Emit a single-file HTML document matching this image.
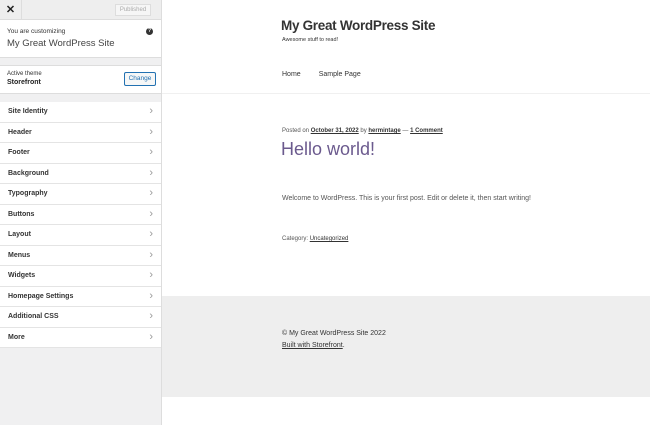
<!DOCTYPE html>
<html><head><style>
*{margin:0;padding:0;box-sizing:border-box}
body{width:650px;height:425px;overflow:hidden;font-family:"Liberation Sans",sans-serif;background:#fff;position:relative}
#sb{position:absolute;left:0;top:0;width:162px;height:425px;background:#f0f0f1;border-right:1px solid #ddd}
.top{height:20px;background:#eee;border-bottom:1px solid #ddd;position:relative}
.x{position:absolute;left:0;top:0;width:22px;height:20px;border-right:1px solid #ddd;font-size:11px;font-weight:bold;text-align:center;line-height:20px;color:#222}
.pub{position:absolute;right:10px;top:4px;width:36px;height:12px;border:1px solid #ddd;background:#f6f6f6;color:#aaa;font-size:6px;text-align:center;line-height:11px}
.cust{background:#fff;height:38px;border-bottom:1px solid #ddd;position:relative;padding:8px 7px}
.cust .s{font-size:6.5px;color:#333}
.cust .t{font-size:9.5px;color:#444;margin-top:3px}
.q{position:absolute;right:8px;top:8px;width:7px;height:7px;border-radius:50%;background:#333;color:#fff;font-size:5px;text-align:center;line-height:7px;font-weight:bold}
.th{background:#fff;margin-top:7px;height:29px;border-top:1px solid #ddd;border-bottom:1px solid #ddd;position:relative;padding:5px 7px}
.th .a{font-size:6px;color:#333}.th .b{font-size:7px;font-weight:bold;color:#222;margin-top:2px}
.ch{position:absolute;right:5px;top:6px;width:32px;height:14px;border:1px solid #2271b1;background:#f6f7f7;color:#2271b1;font-size:6.5px;text-align:center;line-height:12px;border-radius:2px}
.list{margin-top:8px}
.it{height:20.5px;background:#fff;border-bottom:1px solid #e4e4e4;font-size:7px;font-weight:bold;color:#333;padding-left:8px;line-height:20px;position:relative}
.it:after{content:"›";position:absolute;right:8px;top:0;font-size:11px;font-weight:normal;color:#999;line-height:19px}
#main{position:absolute;left:162px;top:0;width:488px;height:425px}
.h1{position:absolute;left:119px;top:18px;font-size:13.5px;font-weight:bold;color:#333;letter-spacing:-0.3px}
.tag{position:absolute;left:120px;top:37px;font-size:5.5px;color:#333}
.nav{position:absolute;left:120px;top:71px;font-size:7px;color:#333}
.nav span{margin-right:18px}
.hr{position:absolute;left:0;top:93px;width:488px;border-top:1px solid #f0f0f0}
.meta{position:absolute;left:120px;top:128px;font-size:6px;color:#555}
.meta u{color:#333;font-weight:bold}
.hw{position:absolute;left:119px;top:139px;font-size:18px;color:#6b5a8e}
.p{position:absolute;left:120px;top:195px;font-size:7px;color:#555}
.cat{position:absolute;left:120px;top:236px;font-size:6px;color:#555}
.foot{position:absolute;left:0;top:296px;width:488px;height:101px;background:#eeeeee}
.f1{position:absolute;left:120px;top:330px;font-size:7px;color:#333}
.f2{position:absolute;left:120px;top:342px;font-size:7px;color:#333}
</style></head><body>
<div id="sb">
<div class="top"><div class="x">✕</div><div class="pub">Published</div></div>
<div class="cust"><div class="s">You are customizing</div><div class="t">My Great WordPress Site</div><div class="q">?</div></div>
<div class="th"><div class="a">Active theme</div><div class="b">Storefront</div><div class="ch">Change</div></div>
<div class="list">
<div class="it">Site Identity</div><div class="it">Header</div><div class="it">Footer</div><div class="it">Background</div><div class="it">Typography</div><div class="it">Buttons</div><div class="it">Layout</div><div class="it">Menus</div><div class="it">Widgets</div><div class="it">Homepage Settings</div><div class="it">Additional CSS</div><div class="it">More</div>
</div>
</div>
<div id="main">
<div class="h1">My Great WordPress Site</div>
<div class="tag">Awesome stuff to read!</div>
<div class="nav"><span>Home</span><span>Sample Page</span></div>
<div class="hr"></div>
<div class="meta">Posted on <u>October 31, 2022</u> by <u>hermintage</u> — <u>1 Comment</u></div>
<div class="hw">Hello world!</div>
<div class="p">Welcome to WordPress. This is your first post. Edit or delete it, then start writing!</div>
<div class="cat">Category: <u style="color:#333">Uncategorized</u></div>
<div class="foot"></div>
<div class="f1">© My Great WordPress Site 2022</div>
<div class="f2"><u>Built with Storefront</u>.</div>
</div>
</body></html>
